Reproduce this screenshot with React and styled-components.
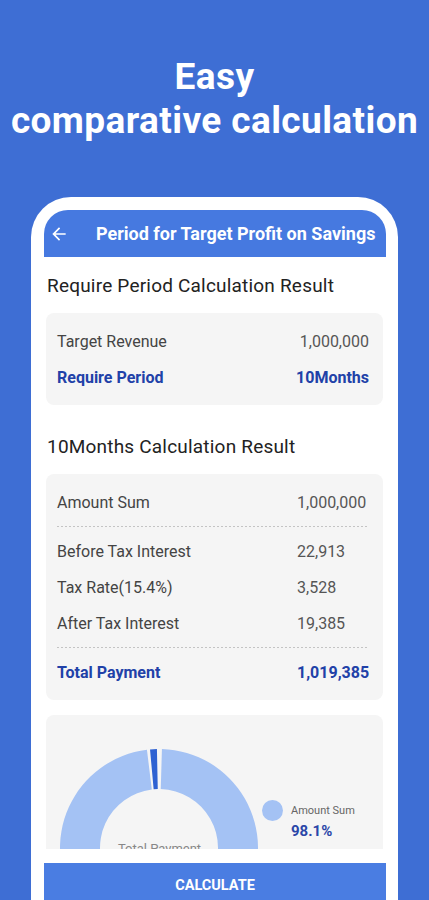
import React from 'react';
import styled, { createGlobalStyle } from 'styled-components';

const GlobalStyle = createGlobalStyle`
    html, body {
        margin: 0;
        padding: 0;
        background: #3E6ED4;
    }
    * {
        box-sizing: border-box;
    }
`;

const RING_LIGHT = '#A4C2F4';
const RING_DARK = '#2F62D2';

// donut slice between two angles (degrees, clockwise from 12 o'clock)
const slicePath = (cx, cy, r0, r1, a0, a1) => {
    const pt = (r, a) => {
        const rad = (a - 90) * Math.PI / 180;
        return [cx + r * Math.cos(rad), cy + r * Math.sin(rad)];
    };
    const large = a1 - a0 > 180 ? 1 : 0;
    const [x0, y0] = pt(r1, a0);
    const [x1, y1] = pt(r1, a1);
    const [x2, y2] = pt(r0, a1);
    const [x3, y3] = pt(r0, a0);
    return `M${x0} ${y0} A${r1} ${r1} 0 ${large} 1 ${x1} ${y1} L${x2} ${y2} A${r0} ${r0} 0 ${large} 0 ${x3} ${y3} Z`;
};

const periodRows = [
    { label: 'Target Revenue', value: '1,000,000' },
    { label: 'Require Period', value: '10Months', accent: true },
];

export default function App() {
    return (
        <Page>
            <GlobalStyle />
            <Headline>
                Easy<br />comparative calculation
            </Headline>
            <Phone>
                <Screen>
                    <AppBar>
                        <BackIcon viewBox="0 0 24 24">
                            <path d="M20 11H7.83l5.59-5.59L12 4l-8 8 8 8 1.41-1.41L7.83 13H20v-2z" />
                        </BackIcon>
                        <AppTitle>Period for Target Profit on Savings</AppTitle>
                    </AppBar>
                    <Scroll>
                        <SectionTitle>Require Period Calculation Result</SectionTitle>
                        <Card>
                            {periodRows.map(r => (
                                <Row key={r.label}>
                                    <Label $accent={r.accent}>{r.label}</Label>
                                    <Value $accent={r.accent} $right>{r.value}</Value>
                                </Row>
                            ))}
                        </Card>

                        <SectionTitle $gap>10Months Calculation Result</SectionTitle>
                        <Card>
                            <Row>
                                <Label>Amount Sum</Label>
                                <Value>1,000,000</Value>
                            </Row>
                            <Dashed />
                            <Row>
                                <Label>Before Tax Interest</Label>
                                <Value>22,913</Value>
                            </Row>
                            <Row>
                                <Label>Tax Rate(15.4%)</Label>
                                <Value>3,528</Value>
                            </Row>
                            <Row>
                                <Label>After Tax Interest</Label>
                                <Value>19,385</Value>
                            </Row>
                            <Dashed />
                            <Row>
                                <Label $accent>Total Payment</Label>
                                <Value $accent>1,019,385</Value>
                            </Row>
                        </Card>

                        <ChartCard>
                            <Donut viewBox="0 0 198 198">
                                <path d={slicePath(99, 99, 59, 99, 1.7, 353)} fill={RING_LIGHT} />
                                <path d={slicePath(99, 99, 59, 99, 354.8, 358.8)} fill={RING_DARK} />
                                <text
                                    x="99.5"
                                    y="104"
                                    textAnchor="middle"
                                    fontSize="13"
                                    fill="#888"
                                    fontFamily="Roboto, sans-serif"
                                >
                                    Total Payment
                                </text>
                            </Donut>
                            <Legend>
                                <Dot />
                                <LegendText>
                                    <LegendLabel>Amount Sum</LegendLabel>
                                    <LegendValue>98.1%</LegendValue>
                                </LegendText>
                            </Legend>
                        </ChartCard>
                    </Scroll>
                    <Footer>
                        <CalcButton>CALCULATE</CalcButton>
                    </Footer>
                </Screen>
            </Phone>
        </Page>
    );
}

const Page = styled.div`
    width: 429px;
    height: 900px;
    overflow: hidden;
    background: #3E6ED4;
    font-family: Roboto, "Noto Sans", sans-serif;
    display: flex;
    flex-direction: column;
`;

const Headline = styled.h1`
    margin: 0;
    padding-top: 55px;
    height: 197px;
    flex-shrink: 0;
    text-align: center;
    color: #fff;
    font-size: 37px;
    letter-spacing: 0.4px;
    line-height: 44px;
    font-weight: 700;
    white-space: nowrap;
`;

const Phone = styled.div`
    flex-shrink: 0;
    margin-left: 31px;
    width: 367px;
    background: #fff;
    border-radius: 40px 40px 0 0;
    padding: 13px 12px 0 13px;
    display: flex;
`;

const Screen = styled.div`
    flex: 1;
    display: flex;
    flex-direction: column;
    border-radius: 24px 24px 0 0;
    overflow: hidden;
    background: #fff;
`;

const AppBar = styled.div`
    height: 47px;
    flex-shrink: 0;
    background: #4679E0;
    display: flex;
    align-items: center;
    padding-left: 5px;
    gap: 27px;
`;

const BackIcon = styled.svg`
    width: 20px;
    height: 20px;
    fill: #fff;
`;

const AppTitle = styled.div`
    color: #fff;
    font-size: 18px;
    font-weight: 700;
    white-space: nowrap;
`;

const Scroll = styled.div`
    height: 592px;
    flex-shrink: 0;
    overflow: hidden;
    padding: 17px 3px 0 2px;
`;

const SectionTitle = styled.div`
    font-size: 19px;
    letter-spacing: 0.2px;
    line-height: 24px;
    color: #222;
    padding-left: 1px;
    margin-top: ${p => p.$gap ? '30px' : '0'};
    margin-bottom: 15px;
`;

const Card = styled.div`
    background: #F5F5F5;
    border-radius: 8px;
    padding: 10px 14px 10px 11px;
    margin-bottom: 15px;
`;

const Row = styled.div`
    height: 36px;
    display: flex;
    align-items: center;
    justify-content: space-between;
    font-size: 16px;
`;

const Label = styled.span`
    color: ${p => p.$accent ? '#2141A8' : '#444'};
    font-weight: ${p => p.$accent ? 700 : 400};
`;

const Value = styled.span`
    width: ${p => p.$right ? 'auto' : '72px'};
    white-space: nowrap;
    color: ${p => p.$accent ? '#2141A8' : '#555'};
    font-weight: ${p => p.$accent ? 700 : 400};
`;

const Dashed = styled.div`
    height: 1px;
    margin: 6px 0;
    background-image: repeating-linear-gradient(90deg, #C4C4C4 0 2px, transparent 2px 4px);
`;

const ChartCard = styled.div`
    background: #F5F5F5;
    border-radius: 8px 8px 0 0;
    height: 300px;
    padding: 34px 0 0 14px;
    display: flex;
    align-items: flex-start;
`;

const Donut = styled.svg`
    width: 198px;
    height: 198px;
    flex-shrink: 0;
`;

const Legend = styled.div`
    margin: 51px 0 0 4px;
    display: flex;
    gap: 8px;
`;

const Dot = styled.span`
    width: 21px;
    height: 21px;
    border-radius: 50%;
    background: ${RING_LIGHT};
`;

const LegendText = styled.div`
    display: flex;
    flex-direction: column;
    padding-top: 4px;
`;

const LegendLabel = styled.span`
    font-size: 11px;
    line-height: 14px;
    color: #666;
`;

const LegendValue = styled.span`
    margin-top: 3px;
    font-size: 15px;
    line-height: 20px;
    font-weight: 700;
    color: #2A46A8;
`;

const Footer = styled.div`
    padding-top: 14px;
    flex-shrink: 0;
`;

const CalcButton = styled.button`
    display: block;
    width: 100%;
    height: 44px;
    border: none;
    background: #4A7DE2;
    color: #fff;
    font-family: Roboto, sans-serif;
    font-size: 14.5px;
    font-weight: 700;
    padding: 0;
`;
